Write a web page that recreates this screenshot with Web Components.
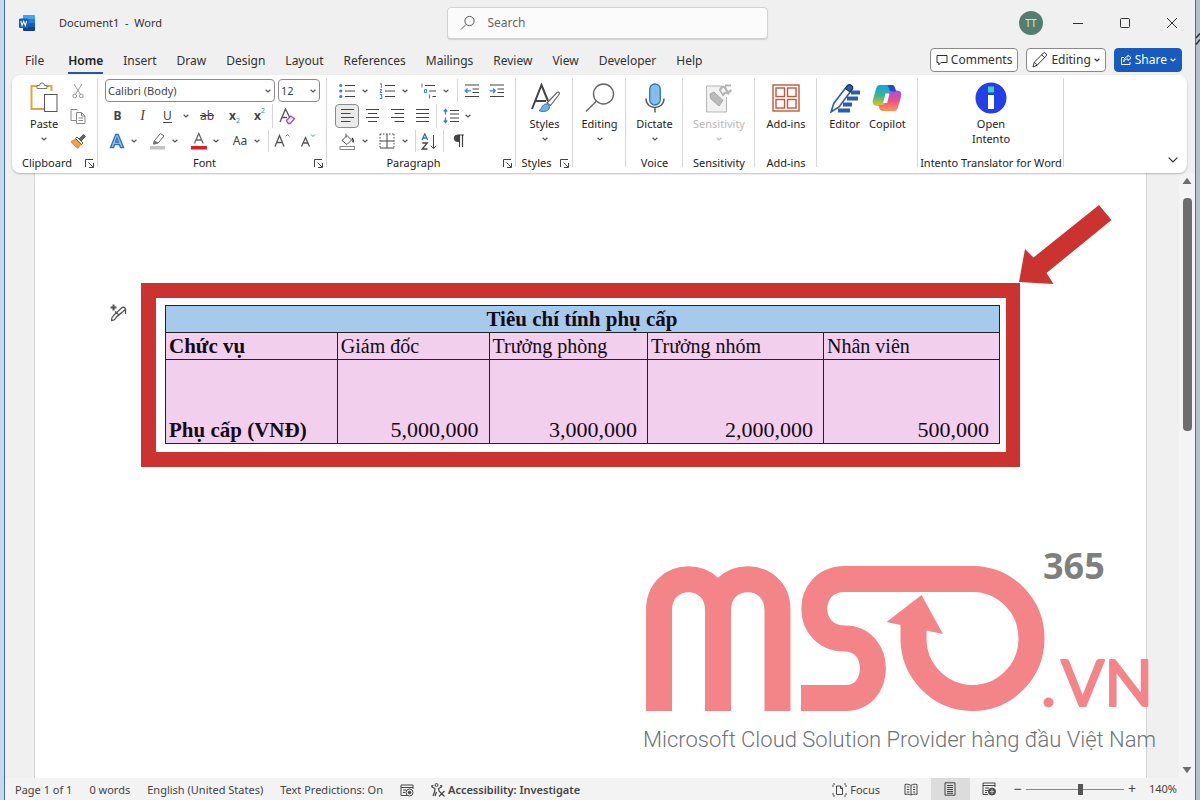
<!DOCTYPE html>
<html lang="en">
<head>
<meta charset="utf-8">
<title>Document1 - Word</title>
<style>
  body {
    margin: 0;
    min-height: 100vh;
    background: linear-gradient(90deg, #c4d9ec 0 50%, #b4c1c9 50% 100%);
    font: 12px/16px "Noto Sans", "Open Sans", sans-serif;
    color: #303030;
  }
</style>
</head>
<body>
<word-window></word-window>

<script>
const ICONS = {
  word: [16, 16, '<rect x="4" y="0" width="12" height="16" rx="1.5" fill="#2b7cd3" stroke="none"/><path d="M4 0h10.500a1.500 1.500 0 0 1 1.500 1.500V4H4z" fill="#41a5ee" stroke="none"/><path d="M4 8h12v4H4z" fill="#185abd" stroke="none"/><path d="M4 12h12v2.500a1.500 1.500 0 0 1-1.500 1.500h-9A1.500 1.500 0 0 1 4 14.500z" fill="#103f91" stroke="none"/><rect x="0" y="3.500" width="9.500" height="9.500" rx="1" fill="#185abd" stroke="none"/><path d="M1.800 6l1.300 4.600L4.700 6.400l1.600 4.200L7.600 6" fill="none" stroke="#fff" stroke-width="1.100"/>'],
  search: [16, 16, '<circle cx="9.500" cy="6" r="4.600"/><path d="M6.200 9.300L1 14.500"/>'],
  min: [12, 12, '<path d="M1 6.500h10"/>'],
  max: [12, 12, '<rect x="1.500" y="1.500" width="9" height="9" rx="1"/>'],
  close: [12, 12, '<path d="M1 1l10 10M11 1L1 11"/>'],
  comment: [12, 12, '<path d="M1 1.500h10v7H5L2.800 10.800V8.500H1z"/>'],
  pencil: [16, 16, '<path d="M1 15l1.300-4.800L11 1.500a1.800 1.800 0 0 1 2.800 0 1.800 1.800 0 0 1 0 2.800L5.200 13.200zM9.700 2.800l3 3M2.500 10.300l2.800 2.800"/>'],
  share: [12, 12, '<path d="M4 3.500H1.500v7h8.500V8M8 1l3 2.700L8 6.500V5C5.800 5 4.500 5.800 3.800 7.800 3.800 4.500 5.500 2.800 8 2.600z"/>'],
  chev: [6, 4, '<path d="M.600.700L3 3 5.400.700" stroke-width="1.200"/>'],
  collapse: [10, 6, '<path d="M.700.700L5 5 9.300.700" stroke-width="1.200"/>'],
  launcher: [9, 9, '<path d="M.500 8V.500H8M3.500 3.500L8 8M8.500 4v4.500H4"/>'],
  paste: [28, 31, '<path d="M7 4H1.500v23H14M17 4h4.500v5" stroke="#e8a33d" stroke-width="2"/><path d="M7 6.500V3.500h2.500a2.500 2.500 0 0 1 5 0H17v3z" fill="#fff" stroke="#777"/><rect x="14.500" y="12.500" width="12.500" height="17" fill="#fff" stroke="#555"/>'],
  cut: [12, 16, '<path d="M2 1l6.500 10.500M10 1L3.500 11.500" stroke="#999"/><circle cx="2.700" cy="13" r="1.900" stroke="#999"/><circle cx="9.300" cy="13" r="1.900" stroke="#999"/>'],
  copy: [16, 16, '<path d="M6 12.500H1v-11h6l1 1" stroke="#888"/><path d="M6.500 4.500h5l3.500 3.500v7.500H6.500zM11.500 4.500V8H15M8.500 10h4.500M8.500 12.500h4.500" stroke="#888"/>'],
  painter: [16, 16, '<path d="M1 8.500l5-2.500 5 5-3 4.300c-2-1-5-3.500-7-6.800z" fill="#f0a04b" stroke="#d9862f"/><path d="M5.500 5.500l6 6 1.500-1.500-6-6z" fill="#fff" stroke="#555"/><path d="M9 6l4.500-4.500 2 2L11 8z" fill="#666" stroke="#555"/>'],
  eraser: [17, 17, '<path d="M1 14L6.500 1 11 10M3 9.500h5" stroke="#555" stroke-width="1.300"/><path d="M7.500 12.500l4.300-4.500 3.700 2.700-4.200 4.800h-2z" fill="#f3e3f7" stroke="#9b4fb3" stroke-width="1.300"/>'],
  effects: [16, 16, '<path d="M1.500 14.500L6.800 1.500h2.400l5.300 13h-3l-1.100-3H5.600l-1.100 3zM6.500 9h3L8 5z" fill="#9cc9f2" stroke="#2e75b6" stroke-width="1.400"/>'],
  highlight: [16, 18, '<path d="M3.500 12l1-3.500L10.500 1.500l3.500 2.500-6 7.200z" stroke="#666"/><path d="M3.500 12l4.500-.800-3.500-2.700z" fill="#777" stroke="#777"/><rect x="0" y="14" width="15" height="3.500" fill="#c4c4c4" stroke="none"/>'],
  fontcolor: [16, 18, '<path d="M3.500 11.500L7.800 1.500 12.200 11.500M5 8h5.700" stroke="#666" stroke-width="1.300"/><rect x="0" y="14" width="16" height="3.500" fill="#e01b24" stroke="none"/>'],
  grow: [16, 16, '<path d="M1 13.500L5.500 2.500l4.500 11M2.700 9.500h5.700" stroke="#555" stroke-width="1.300"/><path d="M11.500 3.500L13.500 1.500l2 2" stroke="#3a9a9a"/>'],
  shrink: [16, 16, '<path d="M1.500 13.500L5.500 4.500l4 9M3 10h5" stroke="#555" stroke-width="1.300"/><path d="M11 1.500l2 2 2-2" stroke="#3a9a9a"/>'],
  bullets: [16, 16, '<path d="M6 2.500h10M6 8h10M6 13.500h10"/><g fill="#3a86b8" stroke="none"><circle cx="1.800" cy="2.500" r="1.600"/><circle cx="1.800" cy="8" r="1.600"/><circle cx="1.800" cy="13.500" r="1.600"/></g>'],
  numbers: [16, 16, '<path d="M6 2.500h10M6 8h10M6 13.500h10"/><path d="M1 1l1.300-.500V5M.800 6.500h2L1 9.500h2M.800 11.500H3L2 13l1 .500v2H.800" stroke="#3a86b8"/>'],
  levels: [16, 16, '<path d="M4 2.500h10M8 8h7M11.500 13.500h3.500"/><path d="M1 .500V4.500" stroke="#777"/><path d="M3.500 6.500h2v3h-2zM8.500 11.500v4" stroke="#3a86b8"/>'],
  outdent: [16, 16, '<path d="M1 2h14M8.500 6h6.500M8.500 9.500h6.500M1 13.500h14"/><path d="M7 7.800H1.500M3.500 5.500L1.200 7.800l2.300 2.300" stroke="#3a86b8" stroke-width="1.300"/>'],
  indent: [16, 16, '<path d="M1 2h14M8.500 6h6.500M8.500 9.500h6.500M1 13.500h14"/><path d="M.500 7.800H6M4 5.500l2.300 2.300L4 10.100" stroke="#3a86b8" stroke-width="1.300"/>'],
  left: [15, 16, '<path d="M1 1.500h13M1 5.500h9.500M1 9.500h13M1 13.500h9.500"/>'],
  center: [15, 16, '<path d="M1 1.500h13M3 5.500h9M1 9.500h13M3 13.500h9"/>'],
  right: [15, 16, '<path d="M1 1.500h13M4.500 5.500h9.500M1 9.500h13M4.500 13.500h9.500"/>'],
  justify: [15, 16, '<path d="M1 1.500h13M1 5.500h13M1 9.500h13M1 13.500h13"/>'],
  spacing: [16, 16, '<path d="M7 2.500h9M7 6h9M7 10h9M7 13.500h9"/><path d="M2.500 1.500v5M.700 3.500l1.800-2 1.800 2M2.500 9.500v5M.700 12.500l1.800 2 1.800-2" stroke="#3a86b8" stroke-width="1.300"/>'],
  shading: [17, 17, '<path d="M3 7.500L8 2.500l4.500 4.500L8 11.500zM7 .500v4" stroke="#555"/><path d="M13 5c1.500 1.500 1.500 3 1 4.500" stroke="#333" stroke-width="1.500"/><rect x="1" y="13.500" width="14.500" height="3" fill="#fff" stroke="#888"/>'],
  borders: [16, 16, '<path d="M1 1v14M15 1v14M1 1h14" stroke-dasharray="1.500 1.500"/><path d="M8 1v14M1 8h14M1 15h14"/>'],
  sort: [17, 17, '<path d="M1 7L3.800.800 6.600 7M2 5h3.600" stroke="#2e75b6" stroke-width="1.300"/><path d="M1.300 10h5L1.300 16h5.200" stroke-width="1.300"/><path d="M12.500 2v13.500M9.800 12.800l2.700 2.800 2.700-2.800"/>'],
  pilcrow: [12, 14, '<path d="M5.500 1H11M6.500 1v12M9.500 1v12" stroke-width="1.200"/><path d="M6.500 1H4.500a3 3 0 0 0 0 6.500h2z" fill="#444"/>'],
  styles: [30, 30, '<path d="M2 26L11.500 2 18 18M5.500 18H16" stroke="#444" stroke-width="2"/><path d="M17 20L27 9.500c2-1 3 .500 2 2L20.500 22.500z" fill="#fff" stroke="#666" stroke-width="1.200"/><path d="M9 27.500c3-1 2.500-6 7-6.500 2.500 0 4 2 3.300 4-1.300 3.500-6.300 4.500-10.300 2.500z" fill="#6cb0f0" stroke="#2e75b6"/>'],
  find: [30, 30, '<circle cx="18.500" cy="11" r="10" stroke="#666" stroke-width="1.400"/><path d="M11.300 18.300L1 28.500" stroke="#666" stroke-width="1.400"/>'],
  mic: [20, 30, '<rect x="4.700" y="1" width="10.600" height="21" rx="5.300" fill="#83beec" stroke="#2e75b6" stroke-width="1.300"/><path d="M1 15.500c0 12 18 12 18 0M10 24.500V29.500" stroke="#555" stroke-width="1.400"/>'],
  label: [28, 30, '<path d="M17 3H1.500v26h20V14" fill="#f2f2f2" stroke="#b5b5b5"/><path d="M5 11l4-2 9 8.500-4 5.500-8.500-7.500z" fill="#bbb" stroke="#a8a8a8"/><path d="M14.500 6.500l4 6.500M18.500 3l4.500 7" stroke="#b5b5b5" stroke-width="1.500"/><path d="M15 7c1.500-4 5-4 6-1s3 4 5.500 1M18 12c1.500-3 4.500-3 6-.500M20 2.500l6 0" stroke="#b5b5b5" stroke-width="2.200"/>'],
  addins: [28, 28, '<g stroke="#c5563a" stroke-width="1.400"><rect x="1" y="1" width="26" height="26"/><rect x="4" y="4" width="8.500" height="8.500"/><rect x="15.500" y="4" width="8.500" height="8.500"/><rect x="4" y="15.500" width="8.500" height="8.500"/><rect x="15.500" y="15.500" width="8.500" height="8.500"/></g>'],
  editor: [30, 30, '<path d="M21 9.500h9M17 15.500h11M13 21.500h9M8 27.500h12" stroke="#2b5cb0" stroke-width="4"/><path d="M1 29l3-9L17.500 2.500c2.500-2 6.500 1 4.500 4L9 24z" fill="#fff" stroke="#2b5cb0" stroke-width="1.600"/><path d="M17.500 2.500c2.500-2 6.500 1 4.500 4l-2 2.500-4.800-3.500z" fill="#2b5cb0"/>'],
  copilot: [30, 28, '<defs><linearGradient id="a" x1="0" y1="0" x2="0" y2="1"><stop offset="0" stop-color="#1aa0e0"/><stop offset=".5" stop-color="#35b890"/><stop offset="1" stop-color="#f0c020"/></linearGradient><linearGradient id="b" x1="0" y1="0" x2="0" y2="1"><stop offset="0" stop-color="#a050e0"/><stop offset=".5" stop-color="#e8508c"/><stop offset="1" stop-color="#ff9550"/></linearGradient></defs><g stroke="none"><path d="M8 1h11c3 0 3.500 1.500 4.300 4l.700 2.500h-3c-2.500 0-3.500 1.500-4.200 4L14.500 19c-.700 2-2 3-4 3H5c-4 0-5-3-4-6.500L4 5c.700-2.500 1.700-4 4-4z" fill="url(#a)"/><path d="M22 27H11c-2.500 0-3.500-1.500-4-3.500L6.500 21h3.500c2.500 0 3.500-1.500 4.200-4L16.500 9.500c.700-2 2-3 4-3H25c4 0 5 3 4 6.500L26 23c-.700 2.500-1.700 4-4 4z" fill="url(#b)"/><path d="M15 1h4c3 0 3.500 1.500 4.300 4l.700 2.500h-3.500c-2 0-3-1-3.500-3C16.500 2.500 16 1.500 15 1z" fill="#1c50c8"/><path d="M13.500 9.500h4l-2.300 9.500h-4z" fill="#fff"/></g>'],
  intento: [32, 32, '<circle cx="16" cy="16" r="15.500" fill="#2340e8" stroke="none"/><rect x="13" y="4.500" width="6" height="6" fill="#3fd0b8" stroke="none"/><rect x="13" y="13" width="6" height="14" fill="#fff" stroke="none"/>'],
  draw: [18, 20, '<path d="M4.500 1.500v6M1.500 4.500h6" stroke-width="2"/><path d="M2.500 17.500c0-3 .500-4 2.500-5.500L12.500 5c2-1.500 4.500-.500 3.500 1.500-1 2-8.500 6.500-9.500 9-.800 1.500-2.500 2-4 2zM16.500 5.500V11M6 8.500l3.500 3" stroke-width="1.300"/>'],
  macro: [14, 13, '<path d="M7 11.500H1V1h12v4M1 3.500h12M3 6h3M3 8.500h2"/><circle cx="9.500" cy="8.500" r="3.500"/><circle cx="9.500" cy="8.500" r="1.300" fill="#444"/>'],
  access: [15, 14, '<circle cx="5.500" cy="2" r="1.500"/><path d="M1 4l3 1.500-.500 3.500L2 13M10.500 4L7.500 5.500 8 8M1 4c-1-1.500.500-1.500 1.500-1M10.500 4c1-1.500-.500-1.500-1.500-1M5.500 9L4 13M8 8l5.500 5.500M13.500 8L8 13.500" stroke-width="1.200"/>'],
  focus: [15, 14, '<path d="M4.500 3h4l2 2v6.500h-6zM8.500 3v2.500H11"/><path d="M1 4V1h2M12 1h2v3M1 10v3h2M12 13h2v-3" stroke-dasharray="2 1"/>'],
  read: [14, 13, '<path d="M7 2.500C5 1 3 1 1 1.500v10c2-.500 4-.500 6 .500 2-1 4-1 6-.500v-10c-2-.500-4-.500-6 1zM7 2.500V12M2.800 4h2.500M2.800 6.500h2.500M2.800 9h2.500M9 4h2.200M9 6.500h2.200M9 9h2.200"/>'],
  print: [12, 14, '<path d="M1 .800h10v12.400H1zM3 3.500h6M3 5.500h6M3 7.500h6M3 9.500h6M3 11.300h6"/>'],
  web: [14, 14, '<path d="M6 12.500H1V1h12v4M1 3.500h12M3 6h4M3 8.500h3M3 10.500h2"/><circle cx="10" cy="9.500" r="3.500" fill="#555"/><path d="M10 7v5M8 9.500h4" stroke="#ddd" stroke-width=".8"/>'],
  up: [10, 8, '<path d="M5 .800L9.500 7H.500z" fill="#6b6e6b" stroke="none"/>'],
  down: [10, 8, '<path d="M5 7.200L9.500 1H.500z" fill="#6b6e6b" stroke="none"/>']
};

const BASE = `<style>
  :host { display: block; box-sizing: border-box; }
  *, ::before, ::after { box-sizing: border-box; }
  button, select, input { font: inherit; color: inherit; margin: 0; }
  button { border: 0; padding: 0; background: none; display: inline-flex; align-items: center; justify-content: center; white-space: nowrap; }
</style>`;

function component(name, render) {
  customElements.define(name, class extends HTMLElement {
    constructor() {
      super();
      this.attachShadow({ mode: 'open' });
    }
    connectedCallback() {
      const t = document.createElement('template');
      t.innerHTML = BASE + (typeof render === 'function' ? render(this) : render);
      this.shadowRoot.replaceChildren(t.content.cloneNode(true));
    }
  });
}

component('ui-icon', el => {
  const [w, h, art] = ICONS[el.getAttribute('name')];
  return `<style>:host { display: inline-flex; flex: none; } svg { display: block; }</style>
  <svg width="${w}" height="${h}" viewBox="0 0 ${w} ${h}" fill="none" stroke="currentColor" aria-hidden="true">${art}</svg>`;
});

/* Ribbon building blocks */
component('ribbon-group', el => `<style>
    :host {
      display: flex; flex-direction: column; flex: none; padding: 4px 0 3px;
      background: linear-gradient(#d6d6d6, #d6d6d6) right 3px / 1px 89px no-repeat;
    }
    .body { flex: 1; display: flex; justify-content: center; }
    .foot { display: grid; grid-template-columns: 1fr; height: 14px; line-height: 14px; font-size: 11px; text-align: center; color: #222; white-space: nowrap; }
    .foot.more { grid-template-columns: 1fr 16px; }
    .foot button { justify-content: flex-start; color: #444; padding-left: 3px; }
  </style>
  <div class="body"><slot></slot></div>
  <div class="foot ${el.hasAttribute('launcher') ? 'more' : ''}"><span>${el.getAttribute('label') || ''}</span>${el.hasAttribute('launcher') ? '<button aria-label="More options"><ui-icon name="launcher"></ui-icon></button>' : ''}</div>`);

component('big-button', el => `<style>
    :host { display: block; }
    button { flex-direction: column; justify-content: flex-start; line-height: 15px; font-size: 11px; color: #222; white-space: normal; }
    .art { height: 37px; display: flex; align-items: center; }
    .chev { height: 15px; display: flex; align-items: center; color: #555; }
    :host([disabled]) button, :host([disabled]) .chev { color: #b8b8b8; }
  </style>
  <button ${el.hasAttribute('disabled') ? 'disabled' : ''}><span class="art"><ui-icon name="${el.getAttribute('icon')}"></ui-icon></span><slot></slot>${el.hasAttribute('menu') ? '<span class="chev"><ui-icon name="chev"></ui-icon></span>' : ''}</button>`);

const ROWS = `<style>
  .rows { display: grid; grid-template-rows: 23px 24px 22px; gap: 2px; justify-content: start; color: #444; }
  .row { display: flex; align-items: stretch; }
  .row > button { width: 24px; }
  .row > .chev { width: 10px; color: #555; }
  .row > .wide { width: 12px; color: #555; }
  .sep { width: 1px; background: #d6d6d6; }
  .row > .on { border: 1px solid #8a8a8a; border-radius: 4px; background: #ebebeb; }
</style>`;
const btn = (icon, label, cls = '') => `<button class="${cls}" aria-label="${label}"><ui-icon name="${icon}"></ui-icon></button>`;
const chev = (label, cls = 'chev') => btn('chev', label, cls);

component('clipboard-tools', `${ROWS}<style>
    :host { display: flex; width: 100%; padding-left: 18px; }
    .rows { margin-left: 4px; }
    big-button { width: 32px; }
  </style>
  <big-button icon="paste" menu>Paste</big-button>
  <div class="rows">
    <div class="row">${btn('cut', 'Cut')}</div>
    <div class="row">${btn('copy', 'Copy')}</div>
    <div class="row">${btn('painter', 'Format painter')}</div>
  </div>`);

component('combo-box', el => `<style>
    :host { position: relative; }
    select { appearance: none; width: 100%; height: 100%; border: 1px solid #8a8a8a; border-radius: 4px; background: #fff; padding: 0 2px; font-size: 11px; color: #444; }
    ui-icon { position: absolute; right: 4px; top: 10px; color: #555; }
  </style>
  <select aria-label="${el.getAttribute('label')}"><option>${el.getAttribute('value')}</option></select><ui-icon name="chev"></ui-icon>`);

component('font-tools', `${ROWS}<style>
    :host { width: 100%; padding-left: 7px; }
    .combos { display: grid; grid-template-columns: 170px 42px; gap: 3px; }
    .style > button { width: 25px; }
    .row > .ab { width: 30px; }
    .b { font-weight: 700; } .i { font: italic 14px "Liberation Serif", serif; }
    .row > .clear { width: 28px; }
    .row > .gap { margin-left: 7px; }
    .row > .size { width: 26px; }
    u { text-underline-offset: 2px; }
    sub, sup { font-size: 7px; line-height: 8px; color: #3a86b8; }
    sub { align-self: flex-end; margin-bottom: 3px; } sup { align-self: flex-start; margin-top: 3px; }
    .far { margin-left: 6px; }
  </style>
  <div class="rows">
    <div class="combos"><combo-box label="Font" value="Calibri (Body)"></combo-box><combo-box label="Font size" value="12"></combo-box></div>
    <div class="row style"><button class="b">B</button><button class="i">I</button><button><u>U</u></button>${chev('Underline style', 'wide')}<button class="ab"><s>ab</s></button><button><b>x</b><sub>2</sub></button><button><b>x</b><sup>2</sup></button><i class="sep"></i>${btn('eraser', 'Clear formatting', 'clear')}</div>
    <div class="row">${btn('effects', 'Text effects')}${chev('Effects')}${btn('highlight', 'Highlight', 'gap')}${chev('Highlight colour')}${btn('fontcolor', 'Font colour', 'gap')}${chev('Font colours')}<button class="gap">Aa</button>${chev('Case')}<i class="sep far"></i>${btn('grow', 'Grow font', 'size')}${btn('shrink', 'Shrink font', 'size')}</div>
  </div>`);

component('paragraph-tools', `${ROWS}<style>
    :host { width: 100%; padding-left: 8px; }
    .row > .gap { margin-left: 4px; }
    .row > .gap2 { margin-left: 6px; }
    .sep { margin: 0 1px; }
    .far { margin-left: 6px; }
    .row > .al { width: 25px; }
    .row > .first { margin-left: 1px; }
    .row > .mark { width: 28px; }
  </style>
  <div class="rows">
    <div class="row">${btn('bullets', 'Bullets')}${chev('Bullet style', 'wide')}${btn('numbers', 'Numbering', 'gap')}${chev('Numbering style', 'wide')}${btn('levels', 'Multilevel list', 'gap2')}${chev('Multilevel style')}<i class="sep far"></i>${btn('outdent', 'Decrease indent', 'al')}${btn('indent', 'Increase indent', 'al')}</div>
    <div class="row">${btn('left', 'Align left', 'on')}${btn('center', 'Center', 'al first')}${btn('right', 'Align right', 'al')}${btn('justify', 'Justify', 'al')}<i class="sep"></i>${btn('spacing', 'Line spacing', 'al')}${chev('Spacing')}</div>
    <div class="row">${btn('shading', 'Shading')}${chev('Shading colour', 'wide')}${btn('borders', 'Borders', 'gap')}${chev('Border style', 'wide')}<i class="sep gap"></i>${btn('sort', 'Sort', 'al')}<i class="sep"></i>${btn('pilcrow', 'Show marks', 'mark')}</div>
  </div>`);

component('word-ribbon', `<style>
    :host { display: flex; height: 98px; margin: 0 8px 0 7px; background: #fff; border-radius: 8px; box-shadow: 0 1px 2px #00000040; position: relative; z-index: 1; }
    .clip { width: 86px; } .font { width: 229px; } .para { width: 189px; } .sty { width: 57px; }
    .edit { width: 53px; } .voice { width: 57px; } .sens { width: 72px; } .add { width: 62px; }
    .ai { width: 101px; } .int { width: 146px; }
    .ai big-button:first-child { margin-right: 9px; }
    .collapse { margin: auto 7px 6px auto; width: 14px; height: 14px; flex: none; }
    .narrow { width: 44px; }
  </style>
  <ribbon-group class="clip" label="Clipboard" launcher><clipboard-tools></clipboard-tools></ribbon-group>
  <ribbon-group class="font" label="Font" launcher><font-tools></font-tools></ribbon-group>
  <ribbon-group class="para" label="Paragraph" launcher><paragraph-tools></paragraph-tools></ribbon-group>
  <ribbon-group class="sty" label="Styles" launcher><big-button icon="styles" menu>Styles</big-button></ribbon-group>
  <ribbon-group class="edit"><big-button icon="find" menu>Editing</big-button></ribbon-group>
  <ribbon-group class="voice" label="Voice"><big-button icon="mic" menu>Dictate</big-button></ribbon-group>
  <ribbon-group class="sens" label="Sensitivity"><big-button icon="label" menu disabled>Sensitivity</big-button></ribbon-group>
  <ribbon-group class="add" label="Add-ins"><big-button icon="addins">Add-ins</big-button></ribbon-group>
  <ribbon-group class="ai"><big-button icon="editor">Editor</big-button><big-button icon="copilot">Copilot</big-button></ribbon-group>
  <ribbon-group class="int" label="Intento Translator for Word"><big-button class="narrow" icon="intento">Open Intento</big-button></ribbon-group>
  <button class="collapse" aria-label="Collapse ribbon"><ui-icon name="collapse"></ui-icon></button>`);

/* Window chrome */
component('title-bar', `<style>
    :host { display: grid; grid-template-columns: 1fr minmax(160px, 321px) 1fr; height: 45px; padding-left: 14px; align-items: center; }
    .name { display: flex; align-items: center; gap: 24px; white-space: pre; font-size: 11px; }
    .search { display: flex; align-items: center; gap: 12px; height: 32px; padding: 0 12px; background: #fbfbfb; border: 1px solid #d2d2d2; border-radius: 4px; box-shadow: 0 1px 1px #0002; color: #555; }
    input { flex: 1; min-width: 0; border: 0; padding: 0; background: none; outline: 0; }
    input::placeholder { color: #666; opacity: 1; }
    .right { display: flex; justify-content: flex-end; align-items: center; }
    .right button { width: 47px; height: 32px; }
    .right .me { width: 24px; height: 24px; margin-right: 11px; border-radius: 50%; background: #547d71; color: #d7e5e0; font-size: 10px; }
  </style>
  <div class="name"><ui-icon name="word"></ui-icon><span>Document1  -  Word</span></div>
  <label class="search"><ui-icon name="search"></ui-icon><input type="search" placeholder="Search" aria-label="Search"></label>
  <div class="right"><button class="me">TT</button><button aria-label="Minimize"><ui-icon name="min"></ui-icon></button><button aria-label="Maximize"><ui-icon name="max"></ui-icon></button><button aria-label="Close"><ui-icon name="close"></ui-icon></button></div>`);

component('tab-bar', `<style>
    :host { display: flex; height: 30px; padding: 0 13px 0 20px; align-items: center; gap: 8px; }
    nav { display: flex; gap: 20px; margin: 4px auto 0 0; }
    nav button { height: 24px; border-bottom: 2px solid transparent; }
    nav button:first-child { margin-right: 4px; }
    nav .on { font-weight: 600; border-color: #2b579a; color: #222; }
    .act { height: 24px; border: 1px solid #8a8a8a; border-radius: 4px; background: #fff; padding: 0 5px; gap: 3px; }
    .share { background: #185abd; border-color: #185abd; color: #fff; }
  </style>
  <nav>${['File', 'Home', 'Insert', 'Draw', 'Design', 'Layout', 'References', 'Mailings', 'Review', 'View', 'Developer', 'Help'].map(t => `<button${t === 'Home' ? ' class="on"' : ''}>${t}</button>`).join('')}</nav>
  <button class="act"><ui-icon name="comment"></ui-icon>Comments</button>
  <button class="act"><ui-icon name="pencil"></ui-icon>Editing<ui-icon name="chev"></ui-icon></button>
  <button class="act share"><ui-icon name="share"></ui-icon>Share<ui-icon name="chev"></ui-icon></button>`);

component('status-bar', `<style>
    :host { display: flex; align-items: center; height: 22px; background: #f3f3f3; padding: 0 18px 0 10px; font-size: 11px; white-space: nowrap; color: #444; }
    .left { display: flex; align-items: center; gap: 17px; margin: 2px auto 0 0; }
    .acc { font-weight: 600; gap: 2px; }
    .view { width: 39px; height: 22px; }
    .on { background: #dcdcdc; }
    .focus { gap: 3px; margin: 2px 12px 0 0; }
    .zoom { display: flex; align-items: center; gap: 3px; margin: 0 12px 0 4px; }
    .zoom button { width: 10px; font-size: 14px; }
    input { appearance: none; width: 98px; height: 14px; background: linear-gradient(#888, #888) center / 100% 1px no-repeat; }
    input::-webkit-slider-thumb { appearance: none; width: 5px; height: 11px; background: #555; }
  </style>
  <div class="left"><span>Page 1 of 1</span><span>0 words</span><button>English (United States)</button><button>Text Predictions: On</button>${btn('macro', 'Record macro')}<button class="acc"><ui-icon name="access"></ui-icon>Accessibility: Investigate</button></div>
  <button class="focus"><ui-icon name="focus"></ui-icon>Focus</button>
  ${btn('read', 'Read mode', 'view')}${btn('print', 'Print layout', 'view on')}${btn('web', 'Web layout', 'view')}
  <div class="zoom"><button aria-label="Zoom out">−</button><input type="range" min="0" max="100" value="56" aria-label="Zoom"><button aria-label="Zoom in">+</button></div>
  <span>140%</span>`);

/* Document */
component('allowance-table', `<style>
    table { width: 100%; border-collapse: collapse; table-layout: fixed; background: #f1cfed; color: #140a16; font: 20px/26px "Liberation Serif", serif; }
    th, td { border: 1px solid #222; padding: 0 4px 0 3px; text-align: left; vertical-align: bottom; white-space: nowrap; }
    th { font-size: 21px; }
    thead th { background: #a6caec; text-align: center; }
    tr { height: 27px; }
    tr.amount { height: 84px; }
    .amount td { font-size: 22px; text-align: right; padding-right: 10px; }
  </style>
  <table>
    <colgroup><col style="width:20.6%"><col style="width:18.2%"><col style="width:19%"><col style="width:21.1%"><col style="width:21.1%"></colgroup>
    <thead><tr><th colspan="5">Tiêu chí tính phụ cấp</th></tr></thead>
    <tbody>
      <tr><th scope="row">Chức vụ</th><td>Giám đốc</td><td>Trưởng phòng</td><td>Trưởng nhóm</td><td>Nhân viên</td></tr>
      <tr class="amount"><th scope="row">Phụ cấp (VNĐ)</th><td>5,000,000</td><td>3,000,000</td><td>2,000,000</td><td>500,000</td></tr>
    </tbody>
  </table>`);

component('callout-frame', `<style>
    :host { position: relative; }
    .box { border: solid #cb3331; border-width: 15px 14px 15px 15px; padding: 7px 6px 8px 9px; }
    .arrow { position: absolute; left: calc(100% - 2px); top: -79px; }
    .pen { position: absolute; left: -32px; top: 20px; color: #555; }
  </style>
  <div class="box"><slot></slot></div>
  <ui-icon class="pen" name="draw"></ui-icon>
  <svg class="arrow" width="94" height="82" viewBox="1018 204 94 82" aria-hidden="true"><path d="M1019 282L1025 249 1033.500 257.500 1099 205 1111.500 220 1046.500 273 1053.500 284z" fill="#cb3331"/></svg>`);

component('mso-logo', `<style>svg { display: block; }
    .tag { font: 300 22px "Roboto", sans-serif; } .num { font: 700 36px "Noto Sans", sans-serif; }
    .vn { font: 400 64px "Lato", sans-serif; stroke: #f38588; stroke-width: 2px; stroke-linejoin: round; }</style>
  <svg width="520" height="240" viewBox="640 525 520 240" role="img" aria-label="MSO 365 .VN">
    <g fill="none" stroke="#f38588" stroke-width="26">
      <path d="M659 711V610C659 569 718 569 718 610V711M718 711V610C718 569 777.500 569 777.500 610V711"/>
      <path d="M801 698H846C882 698 882 638.500 845 638.500C804 638.500 804 579 845 579H973.500A59 59.500 0 1 1 913.500 638V622"/>
    </g>
    <path d="M921.500 595L886.500 622 943 634z" fill="#f38588"/>
    <circle cx="1048.500" cy="702.500" r="5" fill="#f38588"/>
    <text class="vn" x="1061" y="706" fill="#f38588">VN</text>
    <text class="num" x="1043" y="579" fill="#7f7f7f">365</text>
    <text class="tag" x="643" y="747" fill="#6e7578">Microsoft Cloud Solution Provider hàng đầu Việt Nam</text>
  </svg>`);

component('document-view', `<style>
    :host { display: flex; flex: 1; background: #f0f0f0; }
    .page { flex: 1; margin: 0 32px 0 29px; padding: 110px 126px 0 106px; background: #fff; border: solid #d4d4d4; border-width: 0 1px; position: relative; }
    mso-logo { position: absolute; right: -14px; bottom: 13px; }
    .scroll { width: 16px; display: flex; flex-direction: column; align-items: center; padding: 4px 0; background: #f4f4f4; }
    .thumb { width: 9px; flex: 233; margin-top: 13px; border-radius: 4px; background: #6b6e6b; }
    .rest { flex: 335; }
  </style>
  <div class="page">
    <callout-frame><allowance-table></allowance-table></callout-frame>
    <mso-logo></mso-logo>
  </div>
  <div class="scroll"><ui-icon name="up"></ui-icon><div class="thumb"></div><div class="rest"></div><ui-icon name="down"></ui-icon></div>`);

component('word-window', `<style>
    :host { display: flex; flex-direction: column; min-height: 100vh; margin: 0 4px; border: solid #4470a8; border-width: 0 1px; background: #f0f0f0; position: relative; }
    .mark { position: absolute; left: 100%; top: 33px; }
  </style>
  <title-bar></title-bar>
  <tab-bar></tab-bar>
  <word-ribbon></word-ribbon>
  <document-view></document-view>
  <status-bar></status-bar>
  <svg class="mark" width="5" height="13" viewBox="0 0 5 13" aria-hidden="true"><path d="M1 5L5 .500M1 11.500L5 6.500" stroke="#333" stroke-width="1.500"/></svg>`);
</script>
</body>
</html>
